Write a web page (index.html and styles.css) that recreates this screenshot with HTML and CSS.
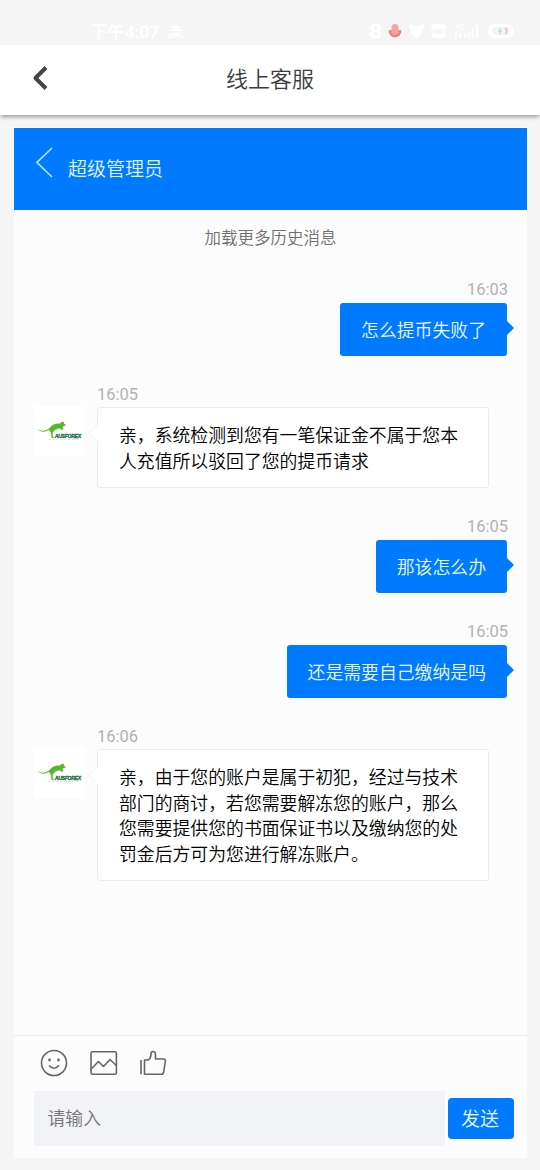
FILE: index.html
```
<!DOCTYPE html>
<html lang="zh-CN">
<head>
<meta charset="utf-8">
<title>线上客服</title>
<link rel="stylesheet" href="styles.css">
</head>
<body>
<div class="status">
  <span class="clock">下午4:07</span>
  <svg class="pay" width="20" height="16" viewBox="0 0 20 16" fill="none" stroke="#fff" stroke-width="1.6"><path d="M4 3H14M9 .5V6M4 6H13Q10 13 4 13.500Q0 13 3 10.500Q8 9 18 14"/></svg>
  <svg class="indicators" width="150" height="18" viewBox="0 0 150 18">
    <g fill="none" stroke="#fff" stroke-width="2.500"><path d="M2 5L5 7M2 13L5 11M6 3H11Q14 6 11 9H6ZM6 9H11Q15 12 11 15H6Z"/></g>
    <path d="M22.500 9A5.500 5.500 0 0 0 33.500 9Z" fill="#f09a98" stroke="#ec7777" stroke-width="1.500"/><rect x="24.500" y="2" width="7" height="10" rx="3.500" fill="#f3a5a2"/>
    <path d="M42 3Q44 1 47 4H52Q55 1 57 3V6L55 8Q55 14 49.500 16Q44 14 44 8L42 6Z" fill="#fff"/>
    <rect x="64.500" y="2" width="14" height="14" rx="3" fill="#fff"/>
    <text class="mini hd" x="66" y="12">HD</text>
    <text class="mini net" x="88" y="7">4G</text>
    <path d="M89 9V16M93 11V16M98 12V16M102 9V16M106 6V16M110 3V16" stroke="#fff" stroke-width="1.800"/>
    <rect x="121" y="2" width="26" height="14" rx="7" fill="#fff"/><rect x="125" y="5" width="18" height="8" rx="4" fill="#f4f4f4"/>
    <path d="M133 6V12M131 9H135" stroke="#a9e4e7" stroke-width="1.300"/><path d="M138 6Q142 9 138 12" fill="none" stroke="#f2b3b7" stroke-width="1.500"/>
  </svg>
</div>
<header class="topbar">
  <svg class="back" width="20" height="28" viewBox="0 0 20 28" fill="none" stroke="#444" stroke-width="4" stroke-linejoin="round"><path d="M16 3.500L5.500 14L16 24.500"/></svg>
  <h1>线上客服</h1>
</header>
<main class="chat">
  <div class="chat-head">
    <svg width="18" height="32" viewBox="0 0 18 32" fill="none" stroke="#b9e4ff" stroke-width="1.700"><path d="M16 1L1 15.500L16 30"/></svg>
    <span>超级管理员</span>
  </div>
  <div class="history">
    <div class="more">加载更多历史消息</div>
    <div class="msg mine"><time>16:03</time><p class="bubble">怎么提币失败了</p></div>
    <div class="msg theirs">
      <svg class="avatar" width="50" height="50" viewBox="0 0 50 50">
        <path d="M3.500 23C7 25.500 12 25.500 16 21.500C18.500 18.500 22 17.200 25.500 17.700L28 15.500L28.700 16.500L30 15.500L30 17.500L32 19.300L29.500 20.200L28.500 21.500L29.500 23.500L27.500 23.700L25.500 22.200L21.500 23.500L18.700 26.500L18.800 30.500L20.500 32H17.500L17 27L15 23.700C11 26.500 6.500 26.300 3.500 23Z" fill="#55b72b"/>
        <text class="logo-text" x="20.800" y="31.500">AUSFOREX</text>
        <path d="M14 33.300H45" stroke="#e9d3bb" stroke-width=".7" stroke-dasharray="3 1"/>
      </svg>
      <div><time>16:05</time><p class="bubble">亲，系统检测到您有一笔保证金不属于您本<br>人充值所以驳回了您的提币请求</p></div>
    </div>
    <div class="msg mine"><time>16:05</time><p class="bubble">那该怎么办</p></div>
    <div class="msg mine"><time>16:05</time><p class="bubble">还是需要自己缴纳是吗</p></div>
    <div class="msg theirs">
      <svg class="avatar" width="50" height="50" viewBox="0 0 50 50">
        <path d="M3.500 23C7 25.500 12 25.500 16 21.500C18.500 18.500 22 17.200 25.500 17.700L28 15.500L28.700 16.500L30 15.500L30 17.500L32 19.300L29.500 20.200L28.500 21.500L29.500 23.500L27.500 23.700L25.500 22.200L21.500 23.500L18.700 26.500L18.800 30.500L20.500 32H17.500L17 27L15 23.700C11 26.500 6.500 26.300 3.500 23Z" fill="#55b72b"/>
        <text class="logo-text" x="20.800" y="31.500">AUSFOREX</text>
        <path d="M14 33.300H45" stroke="#e9d3bb" stroke-width=".7" stroke-dasharray="3 1"/>
      </svg>
      <div><time>16:06</time><p class="bubble">亲，由于您的账户是属于初犯，经过与技术<br>部门的商讨，若您需要解冻您的账户，那么<br>您需要提供您的书面保证书以及缴纳您的处<br>罚金后方可为您进行解冻账户。</p></div>
    </div>
  </div>
  <footer class="composer">
    <div class="tools">
      <svg width="28" height="28" viewBox="0 0 28 28"><circle cx="14" cy="14" r="12.500"/><path d="M9 16.500Q14 22 19 16.500"/><circle class="eye" cx="9.500" cy="11" r="1.400"/><circle class="eye" cx="18.500" cy="11" r="1.400"/></svg>
      <svg width="28" height="28" viewBox="0 0 28 28"><rect x="1" y="2.800" width="25.400" height="22.400" rx="1.500"/><path d="M1.200 20L8.500 12.500L13.500 17.500L20 10.500L26.200 16.500"/></svg>
      <svg width="28" height="28" viewBox="0 0 28 28"><path d="M2 11V25.200M5.500 11H9.500Q12 9 12 5Q12 2.500 14 2.500Q16.500 2.500 16.500 5.500V10H24.500Q26.700 10 26.400 12L24.700 23Q24.300 25.200 22.300 25.200H5.500Z"/></svg>
    </div>
    <div class="entry"><input type="text" placeholder="请输入"><button>发送</button></div>
  </footer>
</main>
</body>
</html>
```
FILE: styles.css
```
* { box-sizing: border-box; }
body {
  margin: 0;
  height: 1170px;
  display: flex;
  flex-direction: column;
  overflow: hidden;
  background: #f5f5f5;
  font-family: Roboto, "Noto Sans CJK SC", sans-serif;
  font-weight: 350;
}
svg { display: block; }
.logo-text { font: italic 900 5.2px "Liberation Sans", sans-serif; letter-spacing: -.35px; fill: #146b4b; stroke: #146b4b; stroke-width: .3px; }
.status {
  height: 45px;
  flex: none;
  display: flex;
  align-items: center;
  padding: 18px 23px 0 90px;
  color: #fff;
}
.clock { font-size: 17.4px; font-weight: 500; line-height: 24px; }
.pay { margin-left: 8px; }
.indicators { margin: -1px 0 0 auto; }
.mini { font-family: Roboto, sans-serif; font-weight: 500; }
.hd { font-size: 8px; fill: #eeeeef; }
.net { font-size: 8px; fill: #fff; }
.topbar {
  height: 70px;
  flex: none;
  display: grid;
  grid-template-columns: 50px 1fr 50px;
  align-items: center;
  background: #fff;
  box-shadow: 0 3px 4px -1px rgba(0, 0, 0, .36);
}
.back { margin: -4px 0 0 30px; }
.topbar h1 {
  margin: 0;
  text-align: center;
  font-size: 22px;
  font-weight: 350;
  line-height: 32px;
  color: #3c3c3c;
}
.chat {
  width: 513px;
  height: 1031px;
  margin: 12px 0 0 14px;
  padding-top: 1px;
  display: flex;
  flex-direction: column;
  background: #fcfcfc;
}
.chat-head {
  height: 82px;
  flex: none;
  display: flex;
  align-items: center;
  gap: 14px;
  padding-left: 22px;
  background: #007aff;
  color: #e1f4ff;
  font-size: 19px;
  line-height: 28px;
}
.chat-head svg { margin-top: -13px; }
.chat-head span { margin-top: 2px; }
.history { flex: 1; padding: 16px 20px 0; }
.more { text-align: center; font-size: 16.5px; line-height: 26px; color: #707070; }
.msg { margin-top: 28px; }
.more + .msg { margin-top: 27px; }
time { display: block; font-size: 16.5px; font-weight: 400; line-height: 20px; padding-top: 1px; margin-bottom: -1px; color: #b2b2b2; }
.bubble {
  position: relative;
  width: fit-content;
  margin: 4px 0 0;
  font-size: 17.85px;
  line-height: 25.5px;
  border-radius: 3px;
  white-space: nowrap;
}
.mine { display: flex; flex-direction: column; align-items: flex-end; }
.mine time { margin-right: -1px; }
.mine .bubble { padding: 15px 21px 12.5px; background: #007aff; color: #eaf8ff; }
.mine .bubble::after {
  content: "";
  position: absolute;
  left: 100%;
  top: 18px;
  border: 7px solid transparent;
  border-left: 7.5px solid #007aff;
  border-right: 0;
}
.theirs { display: flex; gap: 13px; }
.theirs .bubble {
  width: 392px;
  margin-top: 3px;
  padding: 15px 21px 13px;
  border: 1px solid #ebebeb;
  background: #fff;
  color: #000;
}
.theirs .bubble::before {
  content: "";
  position: absolute;
  left: -7px;
  top: 19px;
  width: 12px;
  height: 12px;
  background: #fff;
  border: 1px solid #f3f3f3;
  border-top: 0;
  border-right: 0;
  transform: rotate(45deg);
}
.avatar { margin-top: 22px; flex: none; background: #fff; }
.composer { height: 123px; flex: none; border-top: 1px solid #e9e9e9; padding: 13px 13px 0 20px; }
.tools { display: flex; gap: 21.5px; padding-left: 6px; }
.tools svg { fill: none; stroke: #666; stroke-width: 1.6; stroke-linejoin: round; }
.tools .eye { fill: #666; stroke: none; }
.entry { display: flex; align-items: center; gap: 3px; margin-top: 14px; }
.entry input {
  width: 410.5px;
  height: 55px;
  padding: 0 13.5px;
  border: 0;
  background: #f1f3f7;
  font: 350 17.85px Roboto, "Noto Sans CJK SC", sans-serif;
}
.entry input::placeholder { color: #757575; }
.entry button {
  width: 66px;
  height: 41px;
  padding: 0 1px 2px 0;
  border: 0;
  border-radius: 4px;
  background: #007aff;
  color: #eaf8ff;
  font: 350 19px Roboto, "Noto Sans CJK SC", sans-serif;
}
```
